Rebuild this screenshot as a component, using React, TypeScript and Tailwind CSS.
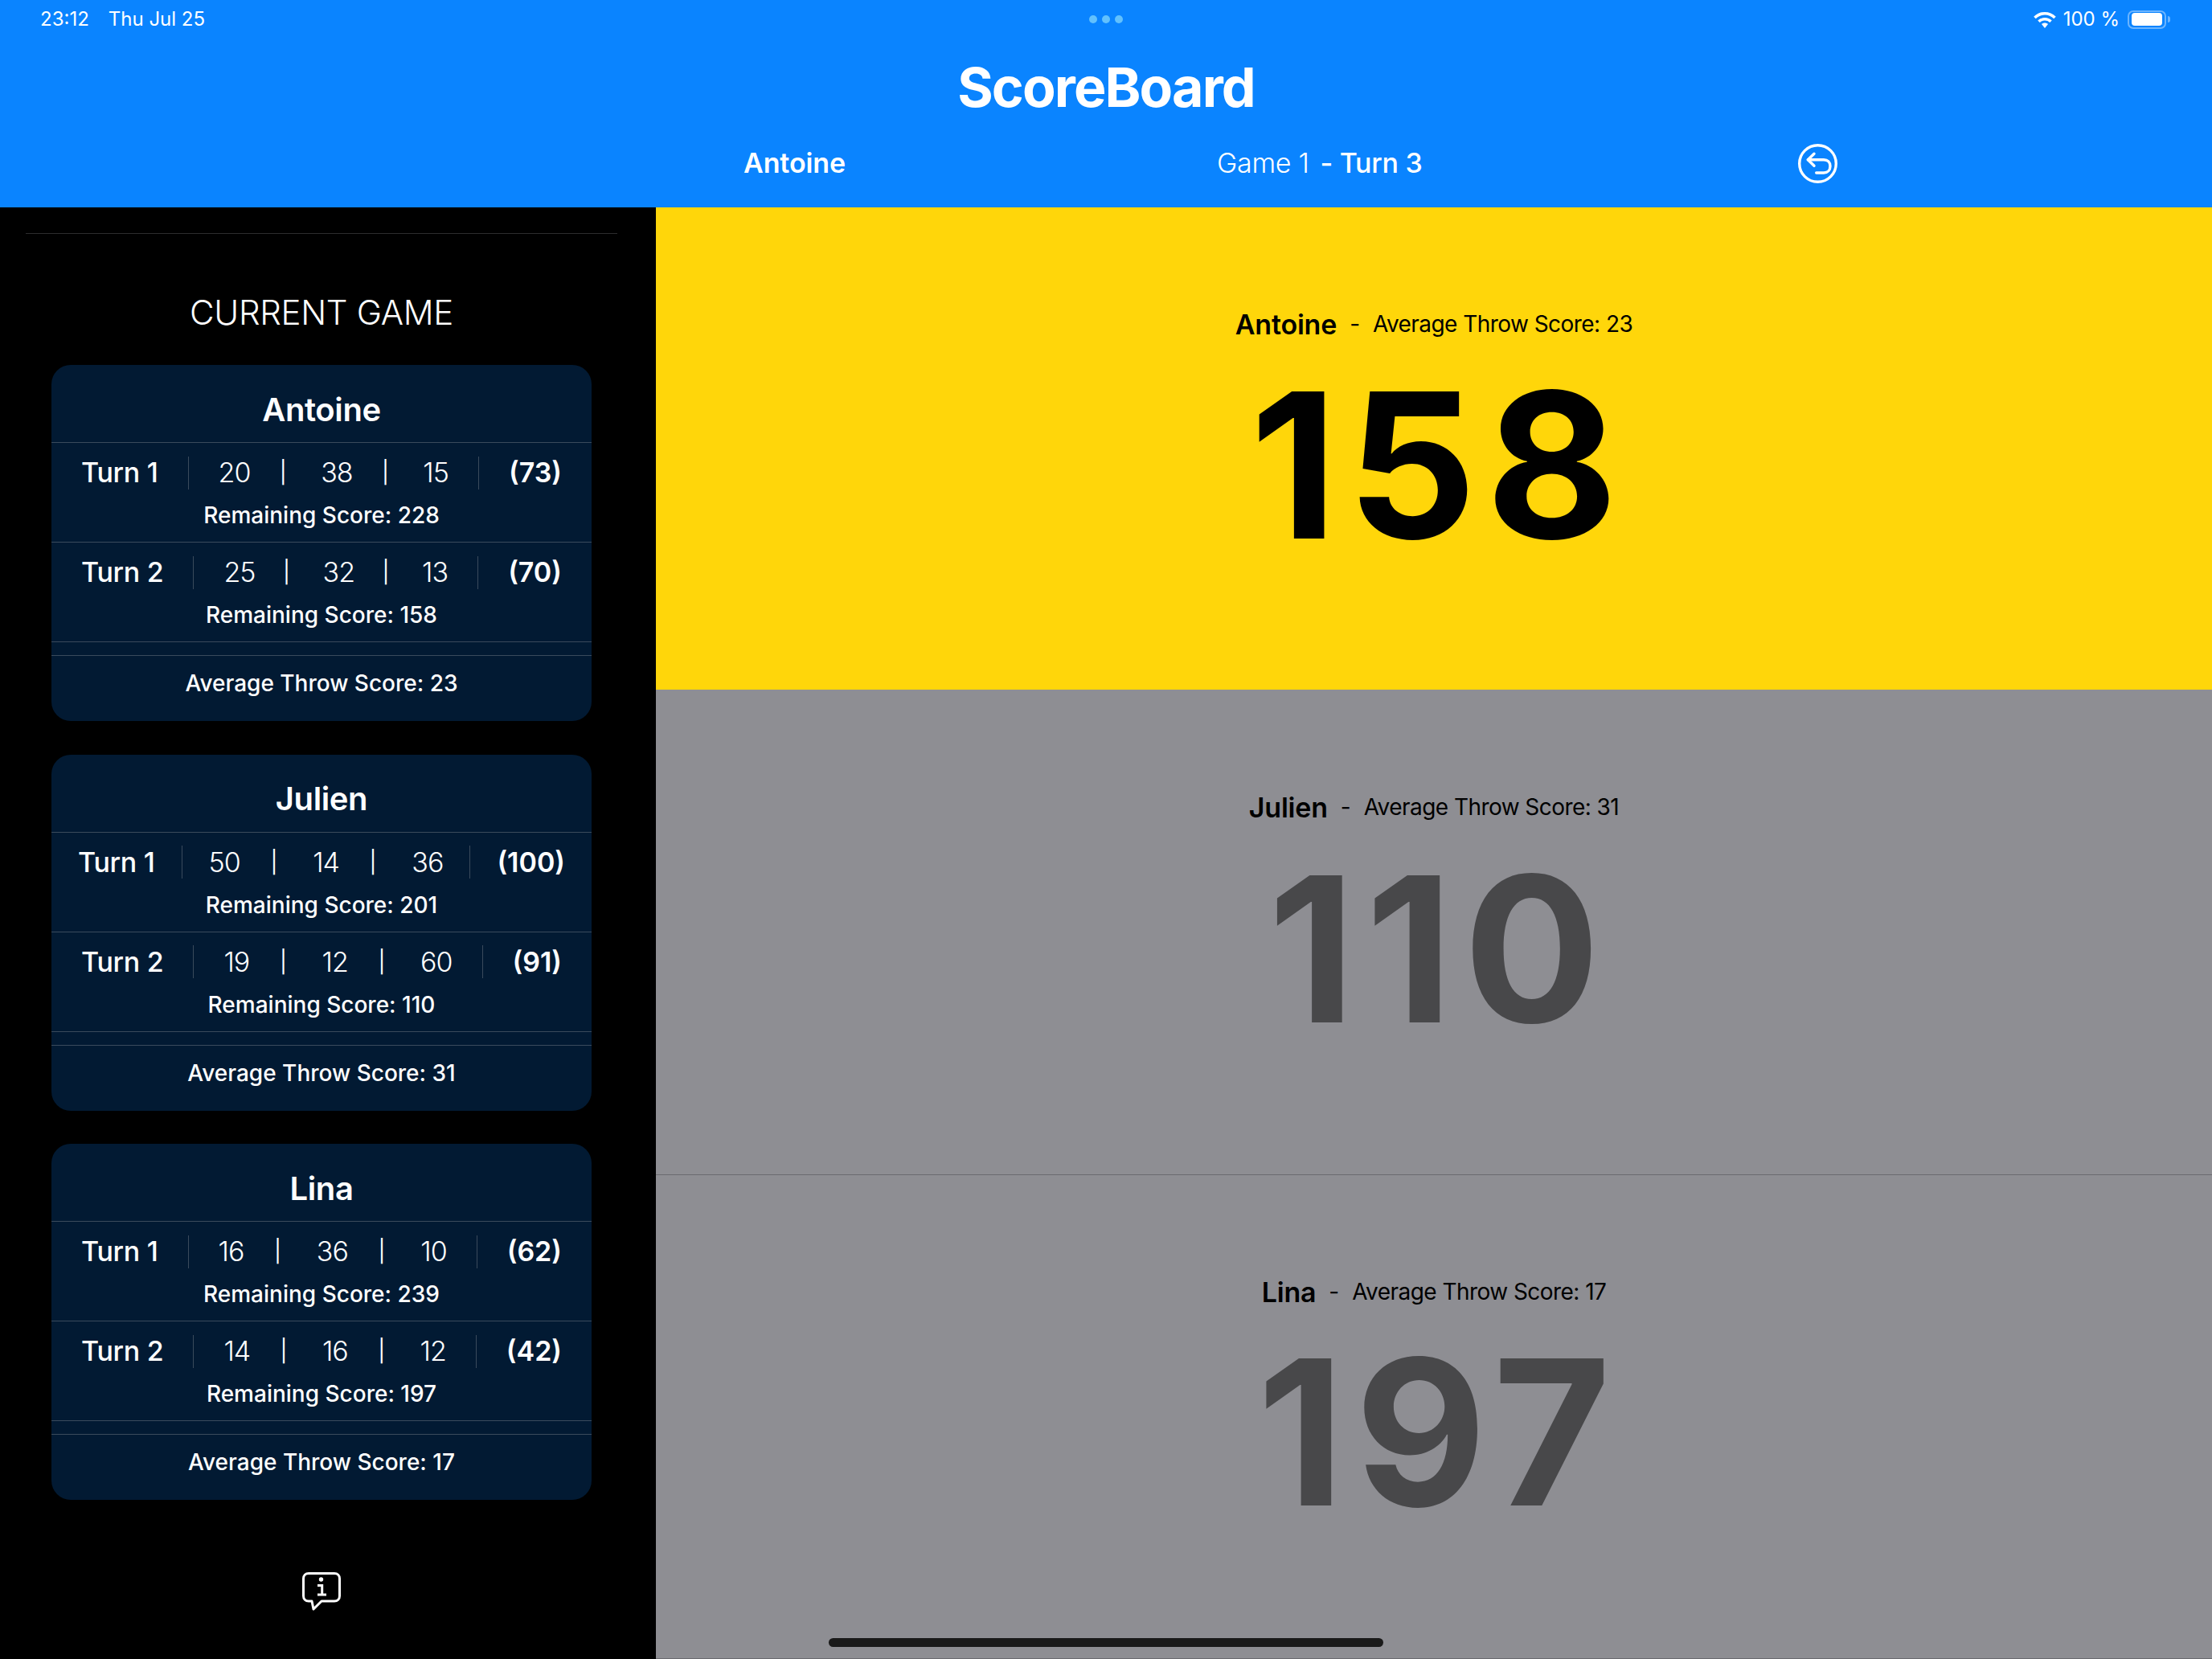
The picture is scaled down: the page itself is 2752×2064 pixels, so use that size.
const players = [
  {
    name: "Antoine",
    average: 23,
    score: 158,
    turns: [
      { label: "Turn 1", throws: [20, 38, 15], total: 73, remaining: 228 },
      { label: "Turn 2", throws: [25, 32, 13], total: 70, remaining: 158 },
    ],
  },
  {
    name: "Julien",
    average: 31,
    score: 110,
    turns: [
      { label: "Turn 1", throws: [50, 14, 36], total: 100, remaining: 201 },
      { label: "Turn 2", throws: [19, 12, 60], total: 91, remaining: 110 },
    ],
  },
  {
    name: "Lina",
    average: 17,
    score: 197,
    turns: [
      { label: "Turn 1", throws: [16, 36, 10], total: 62, remaining: 239 },
      { label: "Turn 2", throws: [14, 16, 12], total: 42, remaining: 197 },
    ],
  },
];

const panelStyles = [
  "flex h-[600px] flex-col items-center bg-[#ffd60a] pt-[123px]",
  "flex h-[603px] flex-col items-center bg-[#8e8e93] pt-[124px]",
  "flex h-[603px] flex-col items-center border-y border-[#6b6b70] bg-[#8e8e93] pt-[123px]",
];

const scoreStyles = [
  "mt-[28px] pl-[12px] text-[252px] font-bold leading-[252px] tracking-[12px] text-black",
  "mt-[29px] pl-[13px] text-[252px] font-bold leading-[252px] tracking-[13px] text-[#48484a]",
  "mt-[27px] pl-[13px] text-[252px] font-bold leading-[252px] tracking-[13px] text-[#48484a]",
];

function StatusBar() {
  return (
    <div className="relative flex h-[48px] items-center justify-between pl-[50px] pr-[52px] text-[24px] text-white">
      <div className="flex gap-[24px]">
        <span>23:12</span>
        <span>Thu Jul 25</span>
      </div>
      <div className="absolute left-[1355px] top-[19px] flex gap-[6px]">
        <span className="h-[10px] w-[10px] rounded-full bg-[#62c1fd]" />
        <span className="h-[10px] w-[10px] rounded-full bg-[#62c1fd]" />
        <span className="h-[10px] w-[10px] rounded-full bg-[#62c1fd]" />
      </div>
      <div className="flex items-center">
        <svg width="28" height="21" viewBox="0 0 28 21" className="mr-[9px]" fill="none">
          <path d="M1.500 8 C8.500 1 19.500 1 26.500 8" stroke="white" strokeWidth="3.600" />
          <path d="M6.500 12.800 C10.500 8.800 17.500 8.800 21.500 12.800" stroke="white" strokeWidth="3.600" />
          <path d="M10 16 C12.200 14 15.800 14 18 16 L14 21 Z" fill="white" />
        </svg>
        <span className="mr-[10px]">100 %</span>
        <div className="flex items-center">
          <div className="flex h-[23px] w-[48px] items-center rounded-[7px] border-2 border-white/40 px-[3px] py-[1.500px]">
            <div className="h-full w-full rounded-[4px] bg-white" />
          </div>
          <div className="ml-[2px] h-[8px] w-[3px] rounded-r-full bg-white/40" />
        </div>
      </div>
    </div>
  );
}

function Header() {
  return (
    <div className="h-[258px] bg-[#0a84ff] text-white">
      <StatusBar />
      <h1 className="mt-[28px] h-[64px] text-center text-[68px] font-bold leading-[64px] tracking-[-1.900px]">
        ScoreBoard
      </h1>
      <div className="mt-[38px] flex items-center pl-[925px] text-[34px] leading-[50px]">
        <span className="font-semibold tracking-[-0.100px]">Antoine</span>
        <span className="ml-[462px] flex gap-[14px] font-light tracking-[-0.300px]">
          Game 1<span className="font-medium">- Turn 3</span>
        </span>
        <svg width="49" height="49" viewBox="0 0 49 49" fill="none" className="ml-[468px]" stroke="white" strokeWidth="3.400" strokeLinecap="round" strokeLinejoin="round">
          <circle cx="24.500" cy="24.500" r="22.800" />
          <path d="M20 12.300 L12.300 19.700 L20 27.300" />
          <path d="M12.300 19.700 H32 C37 19.700 40 23 40 27.800 C40 32.500 37 36 32 36 H22.700" />
        </svg>
      </div>
    </div>
  );
}

function Turn({ turn }: { turn: (typeof players)[number]["turns"][number] }) {
  // three-digit totals push the row out a little and tighten the gaps round the dividers
  const wide = turn.total >= 100;
  return (
    <div className="h-[124px] border-b border-[#3a4a5c]">
      <div className={wide ? "mx-auto flex h-[72px] w-[606px] items-center pt-[2px] text-[34px] leading-[40px] text-white" : "mx-auto flex h-[72px] w-[598px] items-center pt-[2px] text-[34px] leading-[40px] text-white"}>
        <span className="font-medium tracking-[-0.300px]">{turn.label}</span>
        <span className={wide ? "mx-[33px] h-[41px] w-px bg-[#3a4a5c]" : "mx-[37px] h-[41px] w-px bg-[#3a4a5c]"} />
        <div className="flex flex-1 items-center justify-between font-light tracking-[-1px]">
          <span>{turn.throws[0]}</span>
          <span className="mr-[7px] text-[27px] font-normal">|</span>
          <span>{turn.throws[1]}</span>
          <span className="mr-[7px] text-[27px] font-normal">|</span>
          <span>{turn.throws[2]}</span>
        </div>
        <span className={wide ? "mx-[33px] h-[41px] w-px bg-[#3a4a5c]" : "mx-[37px] h-[41px] w-px bg-[#3a4a5c]"} />
        <span className="font-semibold">({turn.total})</span>
      </div>
      <div className="text-center text-[28px] font-medium leading-[36px] text-white">Remaining Score: {turn.remaining}</div>
    </div>
  );
}

function PlayerCard({ player }: { player: (typeof players)[number] }) {
  return (
    <div className="h-[443px] w-[672px] rounded-[24px] bg-[#021a33]">
      <div className="flex h-[97px] items-center justify-center border-b border-[#3a4a5c] pt-[15px] text-[40px] font-semibold tracking-[-0.400px] text-white">
        {player.name}
      </div>
      {player.turns.map((turn) => (
        <Turn key={turn.label} turn={turn} />
      ))}
      <div className="h-[17px] border-b border-[#3a4a5c]" />
      <div className="pt-[10px] text-center text-[28px] font-medium leading-[48px] text-white">
        Average Throw Score: {player.average}
      </div>
    </div>
  );
}

function Sidebar() {
  return (
    <aside className="flex w-[816px] shrink-0 flex-col items-center bg-black pr-[16px]">
      <div className="mt-[32px] h-px w-[736px] bg-[#2c2c2e]" />
      <h2 className="mt-[73px] text-[42px] font-light leading-[50px] tracking-[-0.300px] text-white">CURRENT GAME</h2>
      <div className="mt-[40px] flex flex-col gap-[41.500px]">
        {players.map((player) => (
          <PlayerCard key={player.name} player={player} />
        ))}
      </div>
      <svg width="48" height="48" viewBox="0 0 48 48" fill="none" className="mt-[90px]">
        <path
          d="M8 1.500 H40 C44 1.500 46.500 4 46.500 8 V29.500 C46.500 33.500 44 36 40 36 H24 L14 46 L12 36 H8 C4 36 1.500 33.500 1.500 29.500 V8 C1.500 4 4 1.500 8 1.500 Z"
          stroke="white"
          strokeWidth="3"
          strokeLinejoin="round"
        />
        <circle cx="23.500" cy="9" r="2.700" fill="white" />
        <path d="M19 16.500 H24.700 V28 M19 28 H30" stroke="white" strokeWidth="3" />
      </svg>
    </aside>
  );
}

function ScorePanel({ player, index }: { player: (typeof players)[number]; index: number }) {
  return (
    <section className={panelStyles[index]}>
      <div className="flex h-[44px] items-center text-black">
        <span className="text-[34px] font-semibold tracking-[-0.200px]">{player.name}</span>
        <span className="mx-[16px] text-[28px]">-</span>
        <span className="text-[28px] font-normal tracking-[-0.550px]">Average Throw Score: {player.average}</span>
      </div>
      <div className={scoreStyles[index]}>{player.score}</div>
    </section>
  );
}

export default function App() {
  return (
    <div className="relative h-[2064px] w-[2752px] overflow-hidden bg-black font-['Inter',sans-serif]">
      <Header />
      <div className="flex">
        <Sidebar />
        <main className="flex-1">
          {players.map((player, i) => (
            <ScorePanel key={player.name} player={player} index={i} />
          ))}
        </main>
      </div>
      <div className="absolute left-[1031px] top-[2038px] h-[11px] w-[690px] rounded-full bg-[#1a1a1a]" />
    </div>
  );
}
